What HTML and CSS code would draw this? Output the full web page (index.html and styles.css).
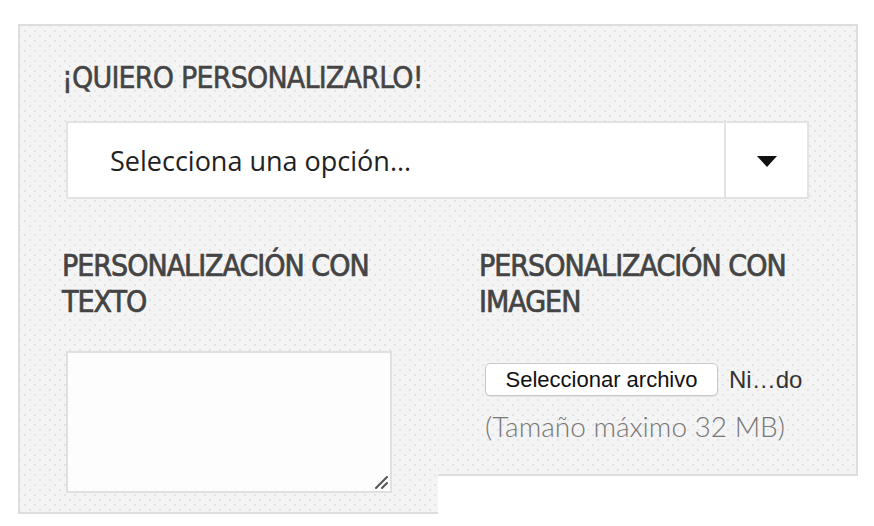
FILE: index.html
```html
<!DOCTYPE html>
<html lang="es">
<head>
<meta charset="utf-8">
<title>Personalizar</title>
<link rel="stylesheet" href="styles.css">
</head>
<body>
<div class="panel">
  <div class="panel-top">
    <h3 class="title">¡QUIERO PERSONALIZARLO!</h3>
    <div class="select">
      <span class="select-text">Selecciona una opción...</span>
      <span class="select-btn"><span class="arrow"></span></span>
    </div>
  </div>
  <div class="cols">
    <div class="col col-left">
      <h4 class="subtitle">PERSONALIZACIÓN CON TEXTO</h4>
      <div class="textarea">
        <svg class="grip" width="14" height="14" viewBox="0 0 14 14"><path d="M13 2 L2 13 M13 8 L8 13" stroke="#555" stroke-width="2" stroke-linecap="round" fill="none"/></svg>
      </div>
    </div>
    <div class="col col-right">
      <h4 class="subtitle">PERSONALIZACIÓN CON IMAGEN</h4>
      <div class="file-row">
        <span class="file-btn">Seleccionar archivo</span>
        <span class="file-name">Ni…do</span>
      </div>
      <p class="note">(Tamaño máximo 32 MB)</p>
    </div>
  </div>
</div>
</body>
</html>
```
FILE: styles.css
```css
html, body {
  margin: 0;
  padding: 0;
  background: #fff;
}
body {
  padding: 24px 16px 0 18px;
  font-family: "Noto Sans", sans-serif;
}
.panel {
  width: 840px;
}
.panel-top, .col {
  background-color: #f4f4f4;
  background-image:
    radial-gradient(circle, #e3e3e3 0.7px, transparent 1.1px),
    radial-gradient(circle, #e3e3e3 0.7px, transparent 1.1px);
  background-size: 10px 10px, 10px 10px;
  background-position: 0 0, 5px 5px;
}
.panel-top {
  border: 2px solid #dedede;
  border-bottom: 0;
  padding: 32px 47px 0 42px;
  height: 172px;
}
.title {
  margin: 0;
  font-family: "DejaVu Sans Condensed", sans-serif;
  font-weight: 400;
  font-size: 30px;
  line-height: 40px;
  letter-spacing: -0.8px;
  -webkit-text-stroke: 0.5px #444;
  color: #444;
}
.select {
  margin: 23px 0 0 4px;
  height: 74px;
  border: 2px solid #e3e3e3;
  background: #fff;
  display: flex;
  align-items: stretch;
}
.select-text {
  flex: 1;
  display: flex;
  align-items: center;
  padding-left: 42px;
  font-family: "Open Sans", sans-serif;
  font-size: 27px;
  color: #222;
  letter-spacing: 0;
}
.select-btn {
  width: 81px;
  border-left: 2px solid #e3e3e3;
  display: flex;
  align-items: center;
  justify-content: center;
}
.arrow {
  width: 0;
  height: 0;
  border-left: 10px solid transparent;
  border-right: 10px solid transparent;
  border-top: 11px solid #111;
  margin-top: 2px;
}
.cols {
  display: grid;
  grid-template-columns: 420px 420px;
  align-items: start;
}
.col-left {
  border-left: 2px solid #dedede;
  border-bottom: 2px solid #dedede;
  padding: 18px 0 0 42px;
  height: 264px;
}
.col-right {
  border-right: 2px solid #dedede;
  border-bottom: 2px solid #dedede;
  padding: 18px 0 0 41px;
  height: 226px;
}
.subtitle {
  margin: 0;
  font-family: "DejaVu Sans Condensed", sans-serif;
  font-weight: 400;
  font-size: 30px;
  line-height: 36px;
  letter-spacing: -1px;
  -webkit-text-stroke: 0.7px #444;
  color: #444;
  width: 360px;
}
.textarea {
  position: relative;
  margin: 31px 0 0 4px;
  width: 322px;
  height: 138px;
  border: 2px solid #e0e0e0;
  background: #fdfdfd;
}
.grip {
  position: absolute;
  right: 2px;
  bottom: 2px;
  display: block;
}
.file-row {
  margin: 43px 0 0 6px;
  display: flex;
  align-items: center;
  gap: 11px;
}
.file-btn {
  box-sizing: border-box;
  height: 33px;
  width: 233px;
  border: 1px solid #c8c8c8;
  border-radius: 5px;
  background: #fff;
  box-shadow: 0 1px 1px rgba(0,0,0,0.08);
  display: flex;
  align-items: center;
  justify-content: center;
  font-family: "Liberation Sans", Arial, sans-serif;
  font-size: 22px;
  color: #111;
}
.file-name {
  font-family: "Liberation Sans", Arial, sans-serif;
  font-size: 24px;
  color: #333;
}
.note {
  margin: 14px 0 0 6px;
  font-family: "Lato", sans-serif;
  font-weight: 300;
  font-size: 28px;
  line-height: 32px;
  color: #777;
}
```
